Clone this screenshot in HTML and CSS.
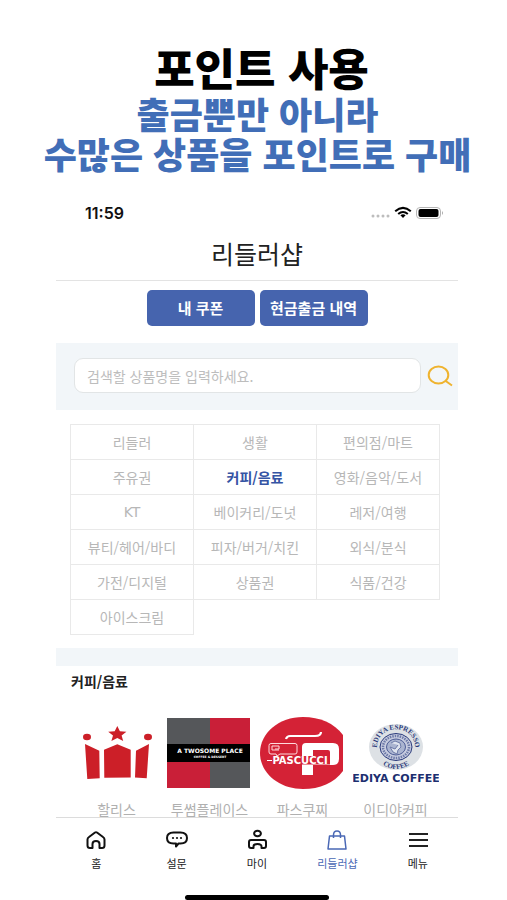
FILE: index.html
```html
<!DOCTYPE html>
<html lang="ko">
<head>
<meta charset="utf-8">
<meta name="viewport" content="width=device-width, initial-scale=1">
<title>리들러샵</title>
<link rel="stylesheet" href="styles.css">
</head>
<body>
<header class="promo">
  <h1 class="promo-title">포인트 사용</h1>
  <p class="promo-text">출금뿐만 아니라<br>수많은 상품을 포인트로 구매</p>
</header>

<div class="app">
  <div class="status">
    <span class="time">11:59</span>
    <svg class="status-icons" width="74" height="14" viewBox="0 0 74 14" aria-hidden="true">
      <g fill="#bdbdbd"><circle cx="3" cy="10" r="1.5"/><circle cx="8" cy="10" r="1.5"/><circle cx="13" cy="10" r="1.5"/><circle cx="18" cy="10" r="1.5"/></g>
      <g fill="none" stroke="#000" stroke-width="2.1"><path d="M25.2 5.2Q33 -1.4 40.8 5.2"/><path d="M28.2 8Q33 4 37.800 8"/></g>
      <path d="M30.400 9.300Q33 7.400 35.600 9.300L33 12Z"/>
      <rect x="46.500" y="1.500" width="24" height="11" rx="3.500" fill="#fff" stroke="#b5b5b5"/>
      <rect x="48.500" y="3" width="20" height="8" rx="2"/>
      <path d="M72 5v4q2-2 0-4z" fill="#aaa"/>
    </svg>
  </div>
  <h2 class="app-title">리들러샵</h2>

  <main class="content">
    <div class="actions">
      <button class="action" type="button">내 쿠폰</button>
      <button class="action" type="button">현금출금 내역</button>
    </div>

    <form class="search">
      <input class="search-input" type="text" aria-label="상품명 검색" placeholder="검색할 상품명을 입력하세요.">
      <button class="search-button" type="button" aria-label="검색">
        <svg width="26" height="22" viewBox="0 0 26 22" fill="none" stroke="#efb32f" stroke-width="2"><ellipse cx="11.500" cy="10" rx="9.800" ry="8.500"/><path d="M18 15.500L25 20.500"/></svg>
      </button>
    </form>

    <nav class="categories" aria-label="상품 분류">
      <a href="#">리들러</a><a href="#">생활</a><a href="#">편의점/마트</a>
      <a href="#">주유권</a><a href="#" class="selected">커피/음료</a><a href="#">영화/음악/도서</a>
      <a href="#" class="latin">KT</a><a href="#">베이커리/도넛</a><a href="#">레저/여행</a>
      <a href="#">뷰티/헤어/바디</a><a href="#">피자/버거/치킨</a><a href="#">외식/분식</a>
      <a href="#">가전/디지털</a><a href="#">상품권</a><a href="#">식품/건강</a>
      <a href="#">아이스크림</a>
    </nav>

    <section class="brands">
      <h3 class="brands-title">커피/음료</h3>
      <div class="brand-list">
        <a class="brand" href="#">
          <svg width="86" height="72" viewBox="-1 0 86 72" fill="#cc1f28" aria-hidden="true">
            <ellipse cx="12" cy="20" rx="4" ry="3.300"/><ellipse cx="73" cy="20" rx="4" ry="3.300"/>
            <path d="M42.300 9l2.600 5.300 6.500.4-4.800 3.700 1.600 5.600-5.900-3-5.900 3 1.600-5.600-4.800-3.700 6.500-.4z"/>
            <path d="M10 27l14.300 6.700.4 27.600-12.400.7zM29 32.700l13.300-5.400 13.400 5.400v27.800l-26.400.2zM74 27l-13 6.700-1 26.800 11.700.8z"/>
          </svg>
          <span>할리스</span>
        </a>
        <a class="brand" href="#">
          <svg width="86" height="72" viewBox="0 0 86 72" aria-hidden="true">
            <path d="M0 1h43v70H0z" fill="#55575a"/><path d="M43 1h40v70H43z" fill="#55575a"/>
            <path d="M43 1h40v26H43zM0 45h43v26H0z" fill="#c91f38"/>
            <path d="M0 27h83v18H0z"/>
            <text class="logo-text" x="43" y="36" font-size="6">A TWOSOME PLACE</text>
            <text class="logo-text" x="43" y="41" font-size="3">COFFEE &amp; DESSERT</text>
          </svg>
          <span>투썸플레이스</span>
        </a>
        <a class="brand" href="#">
          <svg width="86" height="72" viewBox="0 0 86 72" aria-hidden="true">
            <path d="M43 0C60 0 74 6 83 18v36C74 66 60 72 43 72 19 72 0 56 0 36S19 0 43 0z" fill="#d42236"/>
            <path d="M26 22q1-3 4-3h25q6 0 6-4" fill="none" stroke="#fff" stroke-width="2.200"/>
            <path d="M42 30q0-4 4-4h27q6 0 6 6v10q0 6-6 6H53v10H42zM53 33v8h17v-6q0-2-2-2z" fill="#fff" fill-rule="evenodd"/>
            <path d="M9 39h61v8.500H9z" fill="#d42236"/>
            <path d="M11 26.500h24q2 0 2 2V35q0 2-2 2H20l-3 2-1-2h-5q-2 0-2-2v-6.500q0-2 2-2z" fill="none" stroke="#ffd9dc" stroke-width="1"/>
            <path d="M19 33h-7v-4h7v3h-4" fill="none" stroke="#ffd9dc"/>
            <path d="M7 43.500h5" stroke="#fff"/>
            <text class="logo-text" x="40" y="47" font-size="10">PASCUCCI</text>
          </svg>
          <span>파스쿠찌</span>
        </a>
        <a class="brand" href="#">
          <svg width="86" height="72" viewBox="0 0 86 72" aria-hidden="true">
            <defs>
              <path id="arc-top" d="M24 34C21 5 65 5 62 34"/>
              <path id="arc-bottom" d="M24 43Q43 61 62 43"/>
            </defs>
            <ellipse cx="43" cy="30" rx="27" ry="23" fill="#dde1e5"/>
            <ellipse cx="43" cy="30" rx="16" ry="13.500" fill="#c8cde0" stroke="#29397a"/>
            <ellipse cx="43" cy="30" rx="13" ry="11" fill="none" stroke="#6d7aa8" stroke-width="2.500" stroke-dasharray="1.500 1"/>
            <ellipse cx="43" cy="30" rx="9.500" ry="8" fill="#aab4d0" stroke="#4e5d96"/>
            <path d="M38 26l4-2 5 2 1 4-3 3-1 4-4-2-3-5 5 2 3-4" fill="#dfe4ef" stroke="#6d7aa8"/>
            <text class="seal-text"><textPath href="#arc-top" startOffset="50%">EDIYA ESPRESSO</textPath></text>
            <text class="seal-text"><textPath href="#arc-bottom" startOffset="50%">COFFEE</textPath></text>
            <text class="logo-text navy" x="43" y="65" font-size="11">EDIYA COFFEE</text>
          </svg>
          <span>이디야커피</span>
        </a>
      </div>
    </section>
  </main>

  <nav class="tabs" aria-label="메뉴">
    <a href="#">
      <svg width="24" height="22" viewBox="0 0 24 22" fill="none" stroke="#111" stroke-width="2" stroke-linejoin="round"><path d="M3.500 10.500Q3.500 9 5 8l6-4.500q1-.7 2 0L19 8q1.500 1 1.500 2.500v6q0 2.500-2.500 2.500h-2.500v-4q0-3-3.500-3t-3.500 3v4H6q-2.500 0-2.500-2.500z"/></svg>
      <span>홈</span>
    </a>
    <a href="#">
      <svg width="24" height="22" viewBox="0 0 24 22" fill="none" stroke="#111" stroke-width="2" stroke-linejoin="round"><path d="M8.500 3.500h7q6.500 0 6.500 5.500t-6.500 5.500h-2L11 17.500v-3H8.500Q2 14.500 2 9t6.500-5.500z"/><g fill="#111" stroke="none"><circle cx="8" cy="9" r="1.100"/><circle cx="12" cy="9" r="1.100"/><circle cx="16" cy="9" r="1.100"/></g></svg>
      <span>설문</span>
    </a>
    <a href="#">
      <svg width="24" height="22" viewBox="0 0 24 22" fill="none" stroke="#111" stroke-width="2" stroke-linejoin="round"><ellipse cx="12.500" cy="4.500" rx="3.400" ry="2.800"/><path d="M6 11h13q2 0 2 2v4q0 2-2 2h-2.500v-1.500q0-2.500-4-2.500t-4 2.500V19H6q-2 0-2-2v-4q0-2 2-2z"/></svg>
      <span>마이</span>
    </a>
    <a href="#" class="current">
      <svg width="24" height="22" viewBox="0 0 24 22" fill="none" stroke="#4a68b5" stroke-width="1.500" stroke-linejoin="round"><path d="M4.500 7h15L21 20H3zM8.500 9V6q0-4 3.500-4t3.500 4v3"/></svg>
      <span>리들러샵</span>
    </a>
    <a href="#">
      <svg width="24" height="22" viewBox="0 0 24 22" stroke="#222" stroke-width="2"><path d="M3 5h19M3 11h19M3 17h19"/></svg>
      <span>메뉴</span>
    </a>
  </nav>
  <div class="home-indicator"></div>
</div>
</body>
</html>
```
FILE: styles.css
```css
* { box-sizing: border-box; }

body {
  margin: 0;
  height: 100vh;
  display: flex;
  flex-direction: column;
  background: #fff;
  color: #222;
  font: 14px/20px "Noto Sans CJK KR", sans-serif;
}

h1, h2, h3, p { margin: 0; }
a { color: inherit; text-decoration: none; }
svg { display: block; }

.promo {
  padding: 41px 0 26px 8px;
  text-align: center;
  white-space: nowrap;
}
.promo-title {
  padding-left: 8px;
  font-size: 44px;
  line-height: 52px;
  font-weight: 900;
  color: #000;
}
.promo-text {
  font-size: 36px;
  line-height: 40px;
  font-weight: 900;
  color: #416eb7;
}

.app {
  flex: 1;
  min-height: 0;
  margin: 0 49px 0 56px;
  display: flex;
  flex-direction: column;
}

.status {
  display: flex;
  justify-content: space-between;
  align-items: center;
  height: 28px;
  padding: 0 14px 0 29px;
}
.time {
  font: 600 16px/20px Inter, sans-serif;
  color: #111;
}

.app-title {
  padding: 14px 0;
  border-bottom: 1px solid #e3e3e3;
  font-size: 25px;
  line-height: 25px;
  font-weight: 400;
  text-align: center;
}

.content {
  flex: 1;
  min-height: 0;
  overflow: hidden auto;
  scrollbar-width: none;
}

.actions {
  display: flex;
  justify-content: center;
  gap: 5px;
  padding: 9px 0 17px;
}
.action {
  width: 108px;
  height: 36px;
  padding: 0;
  border: 0;
  border-radius: 5px;
  background: #4664ae;
  color: #fff;
  font: 700 15px/20px "Noto Sans CJK KR", sans-serif;
}

.search {
  display: flex;
  align-items: center;
  gap: 6px;
  padding: 15px 5px 17px 18px;
  background: #f2f6f9;
}
.search-input {
  flex: 1;
  min-width: 0;
  height: 35px;
  padding: 0 12px;
  border: 1px solid #e2e5e6;
  border-radius: 9px;
  background: #fff;
  font: 14px/20px "Noto Sans CJK KR", sans-serif;
}
.search-input::placeholder { color: #bdbdbd; opacity: 1; }
.search-button {
  padding: 0;
  border: 0;
  background: none;
}

.categories {
  display: grid;
  grid-template-columns: repeat(3, 1fr);
  margin: 14px 18px 13px 14px;
  padding: 1px 0 0 1px;
  color: #b7b7b7;
}
.categories a {
  height: 36px;
  margin: -1px 0 0 -1px;
  border: 1px solid #e9e9e9;
  line-height: 34px;
  text-align: center;
}
.categories .latin { font-family: "DejaVu Sans", sans-serif; }
.categories .selected {
  color: #3554a4;
  font-weight: 700;
}

.brands { border-top: 18px solid #f2f6f9; }
.brands-title {
  padding: 5px 15px;
  font-size: 14px;
  line-height: 20px;
  font-weight: 700;
}
.brand-list {
  display: grid;
  grid-template-columns: repeat(4, 1fr);
  padding: 21px 16px 0 14px;
}
.brand {
  display: flex;
  flex-direction: column;
  align-items: center;
  gap: 10px;
  color: #b0b0b0;
  white-space: nowrap;
}
.logo-text {
  fill: #fff;
  font-family: "DejaVu Sans", sans-serif;
  font-weight: 700;
  text-anchor: middle;
}
.navy { fill: #1d2f70; }
.seal-text {
  fill: #29397a;
  font: 700 7px "Liberation Serif", serif;
  text-anchor: middle;
}

.tabs {
  display: grid;
  grid-template-columns: repeat(5, 1fr);
  height: 78px;
  padding-top: 11px;
  border-top: 1px solid #dcdcdc;
}
.tabs a {
  display: flex;
  flex-direction: column;
  align-items: center;
  gap: 4px;
  font-size: 11px;
  line-height: 16px;
}
.tabs .current { color: #4a68b5; }

.home-indicator {
  align-self: center;
  width: 36%;
  height: 5px;
  border-radius: 3px;
  background: #000;
}
```
